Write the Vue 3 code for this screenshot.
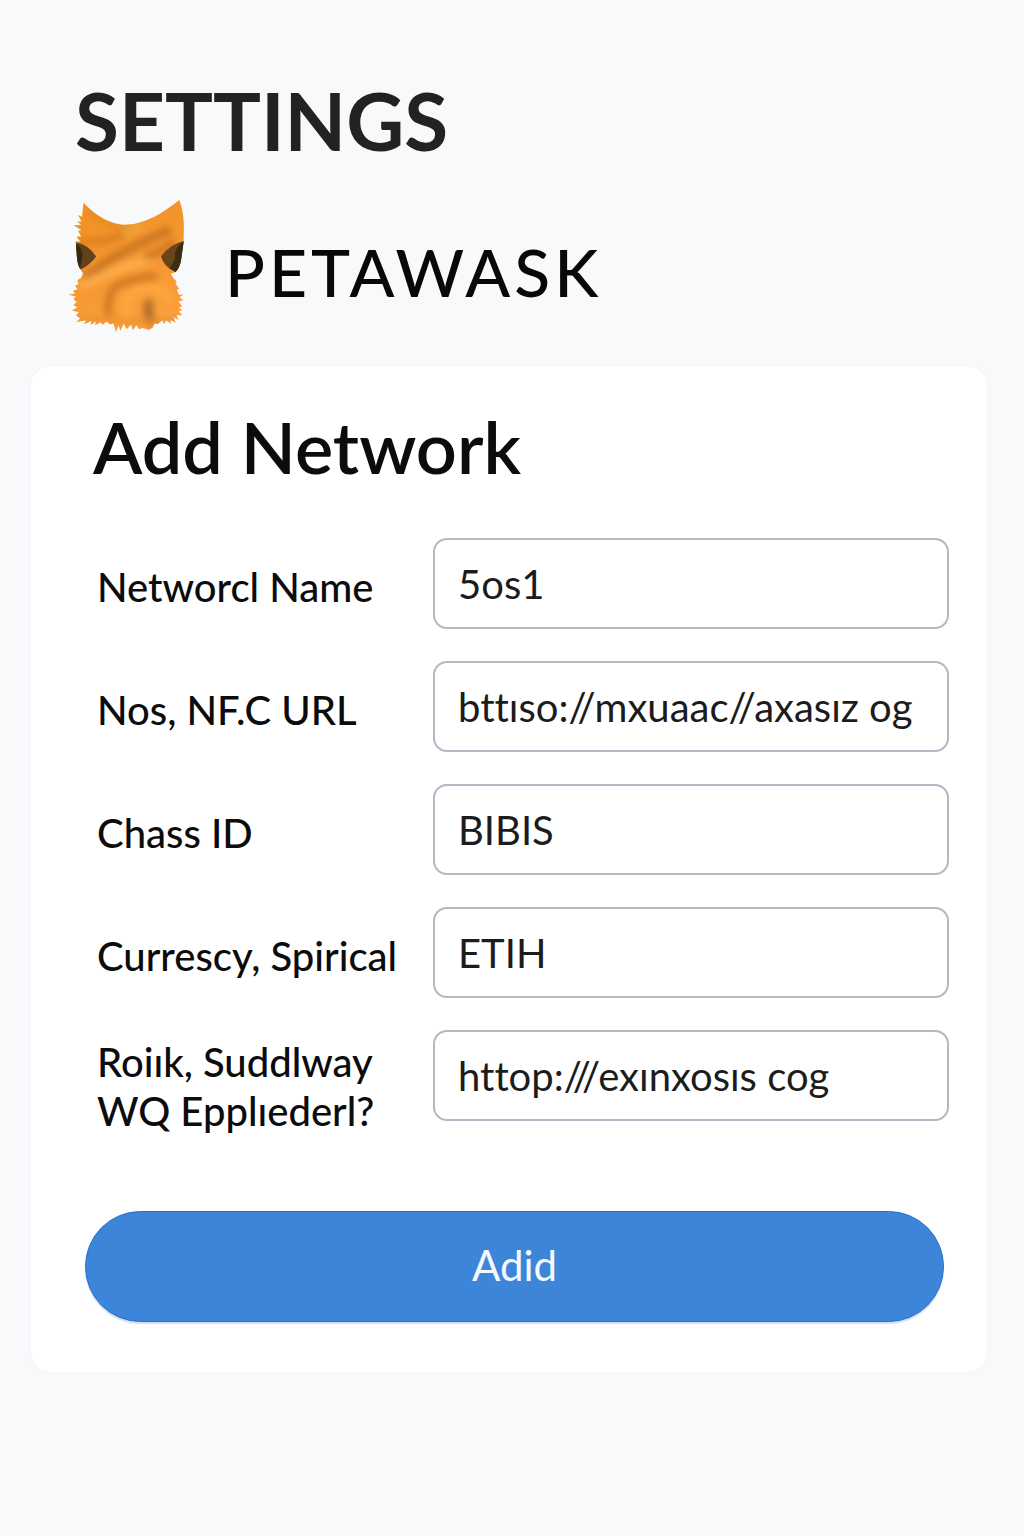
<script setup>
import { reactive } from 'vue'

const fields = reactive([
  { id: 'network-name', label: ['Networcl Name'], value: '5os1' },
  { id: 'rpc-url', label: ['Nos, NF.C URL'], value: 'bttıso://mxuaac//axasız og' },
  { id: 'chain-id', label: ['Chass ID'], value: 'BIBIS' },
  { id: 'currency', label: ['Currescy, Spirical'], value: 'ETIH' },
  { id: 'explorer', label: ['Roiık, Suddlway', 'WQ Epplıederl?'], value: 'httop:///exınxosıs cog' },
])
</script>

<template>
  <main class="page">
    <header class="header">
      <h1 class="title">SETTINGS</h1>
      <div class="brand">
        <svg class="logo" viewBox="50 40 356 406" aria-hidden="true">
          <defs>
            <linearGradient id="fur" x1="0" y1="0" x2="0.3" y2="1">
              <stop offset="0" stop-color="#f48f20" />
              <stop offset="0.5" stop-color="#f4962f" />
              <stop offset="1" stop-color="#fa9f3b" />
            </linearGradient>
            <filter id="soft" x="-30%" y="-30%" width="160%" height="160%">
              <feGaussianBlur stdDeviation="11" />
            </filter>
            <clipPath id="shape">
              <path d="M98 54C125 83 160 110 204 118Q242 124 280 109C325 91 354 70 384 46Q396 75 398 120L397 172Q392 206 389 228Q384 252 370 263L359 266L366 279L377 290L372 294L384 312L377 313L383 329L397 328L385 336L396 346L381 348L393 364L383 366L393 376L382 379L394 390L376 390L382 404L367 395L373 412L357 404L360 415L344 405L338 417L334 405L320 416L310 415L304 427L293 434L274 428L264 432L256 419L246 435L240 418L227 432L218 415L208 438L203 420L195 441L188 414L178 418L167 408L155 419L150 411L132 420L136 408L119 419L122 407L99 417L106 405L77 410L88 400L76 390L84 381L64 376L80 366L68 360L78 350L68 343L75 334L53 329L72 325L67 316L80 313L73 301L83 298L80 285L91 279L97 264Q83 251 79 222L75 170L89 170L77 156L91 155L82 138L92 136L69 122L91 120L79 110L92 110L82 91L94 96Z" />
            </clipPath>
          </defs>
          <g clip-path="url(#shape)">
            <path d="M40 30H420V450H40Z" fill="url(#fur)" />
            <g filter="url(#soft)" fill="none" stroke-linecap="round">
              <path d="M115 82Q170 130 240 125" stroke="#e58c22" stroke-width="18" />
              <path d="M94 168Q160 176 210 150" stroke="#de8020" stroke-width="24" />
              <path d="M110 270Q165 230 220 200T350 138" stroke="#c97622" stroke-width="26" />
              <path d="M98 300Q200 250 290 225" stroke="#ffae4c" stroke-width="24" />
              <path d="M173 384Q163 310 219 292T310 276" stroke="#cf7824" stroke-width="22" />
              <path d="M225 385Q215 330 270 312T350 340" stroke="#ffa741" stroke-width="25" />
              <path d="M293 355Q286 378 300 410" stroke="#a9682a" stroke-width="26" />
              <path d="M285 215Q330 205 365 170" stroke="#bb681e" stroke-width="15" />
              <path d="M80 400Q180 410 370 408" stroke="#e68d2c" stroke-width="12" />
              <path d="M225 142L270 124" stroke="#eaa840" stroke-width="18" />
            </g>
            <path d="M74 172Q112 178 136 215Q119 239 91 253L76 247Z" fill="#62421b" />
            <path d="M74 177Q92 182 95 211L88 252L73 246Z" fill="#342914" />
            <path d="M398 168Q354 178 330 214Q336 245 373 262Q398 240 398 168Z" fill="#6b451a" />
            <path d="M398 169Q368 187 371 221L356 250L374 262L400 240Z" fill="#3c2c14" />
          </g>
        </svg>
        <span class="wordmark">PETAWASK</span>
      </div>
    </header>

    <section class="card" aria-labelledby="card-title">
      <h2 id="card-title" class="card-title">Add Network</h2>
      <form class="form" @submit.prevent>
        <div v-for="field in fields" :key="field.id" class="row">
          <label class="label" :for="field.id">
            <span v-for="line in field.label" :key="line" class="line">{{ line }}</span>
          </label>
          <input :id="field.id" v-model="field.value" class="input" type="text" spellcheck="false" />
        </div>
        <button class="submit" type="submit">Adid</button>
      </form>
    </section>
  </main>
</template>

<style>
body {
  background: #f8f9fb;
}
</style>

<style scoped>
.page {
  box-sizing: border-box;
  padding: 72px 37px 48px 31px;
  font-family: Lato, "Open Sans", sans-serif;
  font-variant-ligatures: none;
  color: #0c0c0c;
}

.header {
  padding-left: 36px;
}

.title {
  margin: 0;
  padding-left: 8px;
  font-size: 80px;
  line-height: 96px;
  font-weight: 700;
  color: #222;
}

.brand {
  display: flex;
  align-items: center;
  gap: 38px;
  margin-top: 30px;
}

.logo {
  width: 120px;
  height: 136px;
}

.wordmark {
  padding-top: 12px;
  font-size: 66px;
  line-height: 80px;
  font-weight: 500;
  letter-spacing: 4px;
  color: #080808;
}

.card {
  margin-top: 32px;
  padding: 36px 38px 50px 54px;
  border-radius: 20px;
  background: #fff;
  box-shadow: 0 0 2px #e9edf2;
}

.card-title {
  margin: 0 0 48px 8px;
  font-size: 72px;
  line-height: 88px;
  font-weight: 600;
}

.form {
  display: flex;
  flex-direction: column;
  gap: 32px;
}

.row {
  display: grid;
  grid-template-columns: 336px 1fr;
  align-items: center;
  padding-left: 12px;
}

.label {
  padding-top: 8px;
  font-size: 40px;
  line-height: 49px;
  font-weight: 500;
  white-space: nowrap;
}

.line {
  display: block;
}

.input {
  box-sizing: border-box;
  align-self: start;
  width: 100%;
  height: 91px;
  padding: 0 23px;
  border: 2px solid #b0b9c4;
  border-radius: 14px;
  background: #fff;
  font: inherit;
  font-size: 40px;
  font-variant-ligatures: none;
  color: #1c1c1c;
}

.submit {
  height: 111px;
  margin: 43px 5px 0 0;
  padding-bottom: 4px;
  border: 1px solid #2473cf;
  border-radius: 56px;
  background: #3d85d8;
  box-shadow: 0 2px 1px #d3dff2;
  font: inherit;
  font-size: 42px;
  color: #f5f9ff;
}
</style>
